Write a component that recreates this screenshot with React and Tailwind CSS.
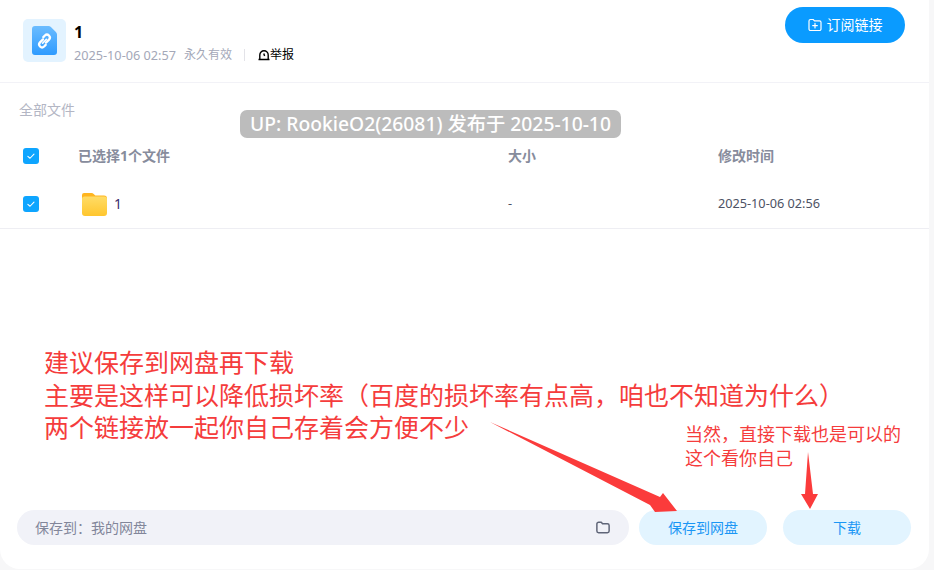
import React from "react";

const CJK = "font-['Noto_Sans','Noto_Sans_CJK_SC',sans-serif]";

function Check() {
  return (
    <span className="flex h-4 w-4 items-center justify-center rounded-[3px] bg-[#0ea5ff]">
      <svg viewBox="0 0 16 16" className="h-3 w-3" fill="none" stroke="#fff" strokeWidth="1.4" strokeLinecap="round" strokeLinejoin="round">
        <path d="M3.8 8.4l2.9 2.6 5.3-5.6" />
      </svg>
    </span>
  );
}

function FileIcon() {
  return (
    <div className="flex h-[43px] w-[43px] items-center justify-center rounded-[5px] bg-[#e3f3ff]">
      <svg viewBox="0 0 25 29" className="h-[29px] w-[25px]">
        <defs>
          <linearGradient id="fg" x1="0" y1="0" x2="0" y2="1">
            <stop offset="0" stopColor="#6bbcff" />
            <stop offset="1" stopColor="#2f9bff" />
          </linearGradient>
        </defs>
        <path d="M3 0h13.5c1 0 1.7.4 2.4 1l5 5c.7.7 1.1 1.5 1.1 2.500V26a3 3 0 0 1-3 3H3a3 3 0 0 1-3-3V3a3 3 0 0 1 3-3z" fill="url(#fg)" />
        <g fill="none" stroke="#fff" strokeWidth="2.3" strokeLinecap="round">
          <path d="M11 13.4l-3 3a2.9 2.9 0 0 0 4.1 4.1l1.6-1.6" />
          <path d="M14 16.6l3-3a2.9 2.9 0 0 0-4.1-4.1l-1.6 1.6" />
          <path d="M10.6 17.2l3.8-3.9" strokeWidth="1.6" />
        </g>
      </svg>
    </div>
  );
}

function FolderIcon() {
  return (
    <svg viewBox="0 0 25 23" className="h-[23px] w-[25px]">
      <defs>
        <linearGradient id="fo" x1="0" y1="0" x2="0" y2="1">
          <stop offset="0" stopColor="#ffdc66" />
          <stop offset="1" stopColor="#ffc62e" />
        </linearGradient>
      </defs>
      <path d="M2 0h7.5c1 0 1.6.4 2.2 1l1.6 1.6H22a3 3 0 0 1 3 3V8H0V2a2 2 0 0 1 2-2z" fill="#ffb51f" />
      <path d="M2.5 3.6h20A2.5 2.5 0 0 1 25 6.100V20a3 3 0 0 1-3 3H3a3 3 0 0 1-3-3V6.100a2.500 2.500 0 0 1 2.500-2.500z" fill="url(#fo)" />
    </svg>
  );
}

export default function App() {
  return (
    <div className={`relative h-[570px] w-[934px] overflow-hidden bg-[#f7f7f8] ${CJK}`}>
      <div className="flex h-[569px] w-[929px] flex-col rounded-b-[20px] bg-white">
        <header className="flex h-[83px] shrink-0 justify-between border-b border-[#f2f2f7] pl-[23px] pr-6">
          <div className="flex pt-[19px]">
            <FileIcon />
            <div className="ml-2">
              <div className="h-[27px] text-base leading-[26px] font-bold text-black">1</div>
              <div className="flex items-center text-xs leading-[18px] text-[#a4a8b8]">
                <span className="text-[12.7px]">2025-10-06 02:57</span>
                <span className="ml-2">永久有效</span>
                <span className="mx-[12px] h-3 w-px bg-[#e3e3e8]" />
                <span className="flex items-center text-black">
                  <svg viewBox="0 0 12 12" className="ml-[1px] h-3 w-3" fill="none" stroke="#000" strokeWidth="1.4">
                    <path d="M.5 10.500h11M1.800 10.500V6a4.200 4.200 0 0 1 8.400 0v4.500" />
                    <path d="M5.800 4.500l.8 2.500" />
                  </svg>
                  举报
                </span>
              </div>
            </div>
          </div>
          <button className="mt-[7px] flex h-9 w-[120px] items-center justify-center gap-[5px] rounded-full bg-[#0a9bff] text-sm text-white">
            <svg viewBox="0 0 14 14" className="h-[14px] w-[14px]" fill="none" stroke="#fff" strokeWidth="1.2" strokeLinecap="round" strokeLinejoin="round">
              <path d="M1 3a1.500 1.500 0 0 1 1.500-1.500h2.700L6.500 2.800h5A1.500 1.500 0 0 1 13 4.300v6.700a1.500 1.500 0 0 1-1.500 1.500h-9A1.500 1.500 0 0 1 1 11z" />
              <path d="M7 5.300v4.600M4.700 7.600h4.600" />
            </svg>
            订阅链接
          </button>
        </header>

        <div className="pl-[19px] pt-[17px] text-sm leading-[19px] text-[#b3b6c4]">全部文件</div>

        <div className="mt-[13px] flex h-[48px] items-center pl-[23px] text-sm font-bold text-[#878c9c]">
          <Check />
          <span className="ml-[39px] w-[430px]">已选择1个文件</span>
          <span className="w-[210px]">大小</span>
          <span>修改时间</span>
        </div>
        <div className="flex h-[49px] items-center border-b border-[#eeeef3] pl-[23px] text-[12.700px] text-[#4d5264]">
          <Check />
          <span className="ml-[43px]"><FolderIcon /></span>
          <span className="ml-[7px] w-[394px] text-sm text-[#3b2a6b]">1</span>
          <span className="w-[210px]">-</span>
          <span>2025-10-06 02:56</span>
        </div>

        <div className="flex-1" />

        <footer className="mb-[24px] flex h-[35px] items-center pl-[17px]">
          <div className="flex h-[35px] w-[612px] items-center justify-between rounded-full bg-[#f1f2f8] pl-[18px] pr-[19px] text-sm text-[#82869a]">
            <span>保存到：我的网盘</span>
            <svg viewBox="0 0 16 14" className="h-[13px] w-[14px]" fill="none" stroke="#5f6578" strokeWidth="1.700" strokeLinejoin="round">
              <path d="M1 3a2 2 0 0 1 2-2h3l1.500 1.800H13a2 2 0 0 1 2 2V11a2 2 0 0 1-2 2H3a2 2 0 0 1-2-2z" />
            </svg>
          </div>
          <button className="ml-[10px] h-[35px] w-[128px] rounded-full bg-[#e2f4ff] text-sm text-[#1a96f5]">保存到网盘</button>
          <button className="ml-[16px] h-[35px] w-[128px] rounded-full bg-[#e2f4ff] text-sm text-[#1a96f5]">下载</button>
        </footer>
      </div>

      {/* overlays */}
      <div className="absolute left-[240px] top-[110px] flex h-[28px] w-[381px] items-center justify-center rounded-[7px] bg-[#bcbcbc] text-[19.300px] font-medium text-white">
        UP: RookieO2(26081) 发布于 2025-10-10
      </div>
      <div className="absolute left-[44px] top-[346px] whitespace-nowrap text-[25px] leading-[32.500px] text-[#f53c3c]">
        <div>建议保存到网盘再下载</div>
        <div>主要是这样可以降低损坏率（百度的损坏率有点高，咱也不知道为什么）</div>
        <div>两个链接放一起你自己存着会方便不少</div>
      </div>
      <div className="absolute left-[685px] top-[422px] whitespace-nowrap text-[18px] leading-[24px] text-[#f53c3c]">
        <div>当然，直接下载也是可以的</div>
        <div>这个看你自己</div>
      </div>
      <svg className="absolute left-0 top-0 h-[570px] w-[934px]" viewBox="0 0 934 570">
        <polygon points="490,422 660,497 663,493 677,511 655,512 650,505" fill="#fb3b3b" />
        <polygon points="808,452 813,494 818,494 810,509 801,494 805,494" fill="#fb3b3b" />
      </svg>
    </div>
  );
}
